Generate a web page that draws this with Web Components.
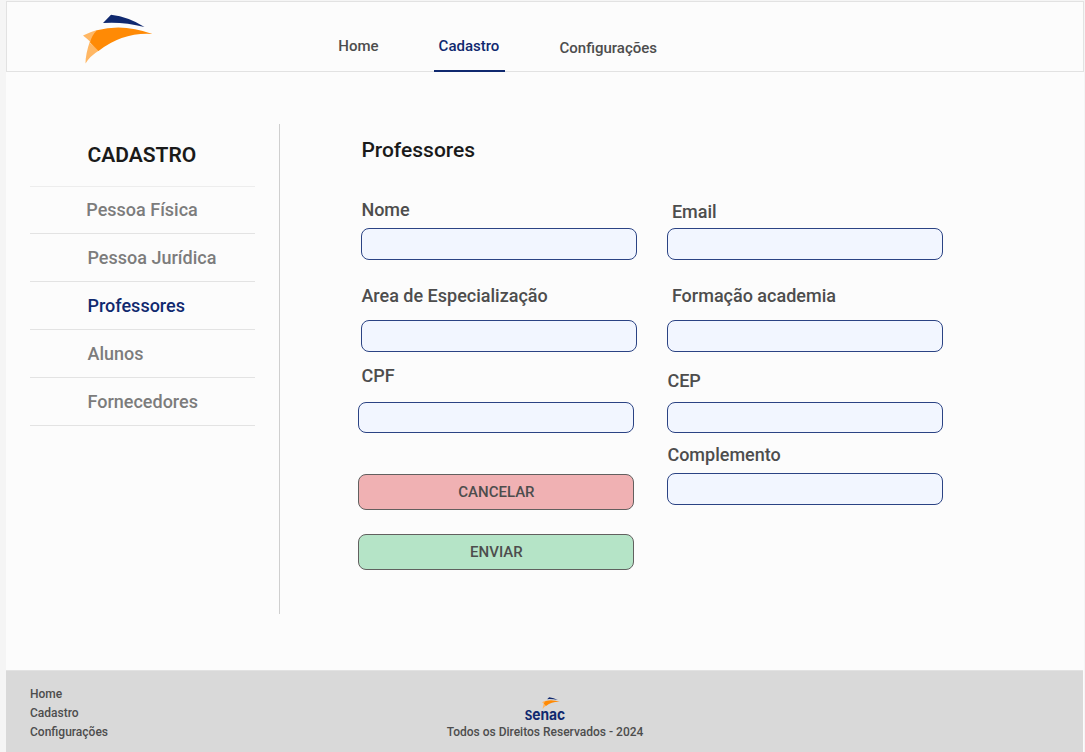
<!DOCTYPE html>
<html lang="pt-BR">
<head>
<meta charset="utf-8">
<title>Cadastro de Professores</title>
<style>
html,body{margin:0;height:100%;background:#f5f5f5;font-family:Roboto,"Liberation Sans",sans-serif;font-weight:500;color:#4d4d4d;overflow:hidden}
</style>
</head>
<body>
<app-page></app-page>
<script>
const define = (name, html, setup) => {
  const tpl = document.createElement('template');
  tpl.innerHTML = '<style>*,:host{box-sizing:border-box}</style>' + html;
  customElements.define(name, class extends HTMLElement {
    connectedCallback() {
      if (this.shadowRoot) return;
      const root = this.attachShadow({ mode: 'open' });
      root.append(tpl.content.cloneNode(true));
      if (setup) setup(this, root);
    }
  });
};

define('brand-mark', `
<style>:host{display:block}svg{display:block;width:100%;height:100%}</style>
<svg viewBox="0 0 70 50" preserveAspectRatio="none">
  <path fill="#ffb764" d="M0 21.5Q7 18 14 16L16 36.500Q7 27 0 21.500Z"/>
  <path fill="#ffb764" d="M7 29L16 36.500Q7 42 2.500 49.500Q2.500 40 7 27Z"/>
  <path fill="#ff8a05" d="M14 16.300Q40 9 69.500 20Q40 18 15.500 37L7 28.500Q9 21 14 16.300Z"/>
  <path fill="#10296f" d="M20 9L28 .8Q46 3 61.500 13Q40 7.500 20 9Z"/>
</svg>`);

define('nav-item', `
<style>
:host{display:flex;justify-content:center;height:68px;padding-top:34px;font-size:15px;line-height:20px;white-space:nowrap}
:host([active]){color:#10296f;border-bottom:2px solid #10296f;height:70px}
</style><slot></slot>`);

define('app-header', `
<style>
:host{display:flex;flex:none;height:71px;border:1px solid #e2e2e2;background:#fcfcfc}
brand-mark{width:70px;height:50px;margin:12px 0 0 76px}
nav{display:flex;margin-left:178px}
nav-item:nth-child(1){width:55px}
nav-item:nth-child(2){width:71px;margin-left:48px;padding-right:1px}
nav-item:nth-child(3){margin-left:54.500px;padding-top:36px}
</style>
<brand-mark></brand-mark>
<nav><nav-item>Home</nav-item><nav-item active>Cadastro</nav-item><nav-item>Configurações</nav-item></nav>`);

define('side-item', `
<style>
:host{display:block;height:48px;padding-left:57.500px;border-bottom:1px solid #e3e3e3;font-size:18px;line-height:47px;color:#7c7c7c}
:host([active]){color:#10296f}
:host([first]){height:47px;padding-left:56.300px;line-height:46px}
</style><slot></slot>`);

define('side-menu', `
<style>
:host{display:block;width:274px;height:490px;border-right:1px solid #cfcfcf;padding:0 24px}
h2{margin:0;height:63px;padding-left:57.500px;border-bottom:1px solid #ededed;font-size:21px;font-weight:600;line-height:63px;color:#1a1a1a}
</style>
<h2>CADASTRO</h2>
<side-item first>Pessoa Física</side-item><side-item>Pessoa Jurídica</side-item>
<side-item active>Professores</side-item><side-item>Alunos</side-item><side-item>Fornecedores</side-item>`);

define('form-field', `
<style>
:host{display:block;width:276px}
label{display:block;font-size:18px;line-height:24px;height:24px;white-space:nowrap}
input{display:block;width:276px;height:32px;border:1px solid #2b4384;border-radius:8px;background:#f2f6ff;margin:0;outline:0;padding:0 10px;font:inherit}
</style>
<label><slot></slot></label><input>`,
(el, root) => {
  const label = root.querySelector('label');
  label.style.marginBottom = (el.getAttribute('gap') || 6) + 'px';
  label.style.paddingLeft = (el.getAttribute('indent') || 0) + 'px';
  if (el.hasAttribute('short')) root.querySelector('input').style.height = '31px';
});

define('form-button', `
<style>
:host{display:block;width:276px}
button{display:block;width:100%;height:36px;border:1px solid #62605f;border-radius:8px;padding:0;font:500 15px/34px Roboto,sans-serif;color:#4d4d4d;background:#b5e4c7}
:host([kind=cancel]) button{background:#f0b1b3}
</style><button><slot></slot></button>`);

define('teacher-form', `
<style>
:host{display:block;padding-left:81.400px}
h1{margin:14px 0 36px;font-size:21px;line-height:24px;font-weight:500;color:#1a1a1a}
.cols{display:flex}
.left{width:309px;margin-left:-3px}
.left .in{margin-left:3px}
.right{padding-top:2px}
</style>
<h1>Professores</h1>
<div class="cols">
  <div class="left">
    <form-field class="in" gap="6">Nome</form-field>
    <form-field class="in" gap="12" style="margin-top:24px">Area de Especialização</form-field>
    <form-field gap="14" indent="3" short style="margin-top:12px">CPF</form-field>
    <form-button kind="cancel" style="margin-top:41px">CANCELAR</form-button>
    <form-button style="margin-top:24px">ENVIAR</form-button>
  </div>
  <div class="right">
    <form-field gap="4" indent="4.500">Email</form-field>
    <form-field gap="12" indent="4.500" style="margin-top:24px">Formação academia</form-field>
    <form-field gap="9" short style="margin-top:17px">CEP</form-field>
    <form-field gap="6" style="margin-top:10px">Complemento</form-field>
  </div>
</div>`);

define('app-footer', `
<style>
:host{display:flex;flex:none;height:82px;margin-right:1px;background:linear-gradient(#e2e2e2 1px,#d9d9d9 1px);font-size:12px;line-height:19px}
ul{list-style:none;margin:0;padding:15px 0 0 24px;width:441px}
.center{width:196px;display:flex;flex-direction:column;align-items:center;white-space:nowrap}
brand-mark{width:18px;height:12px;margin:27px 0 0 11px}
.word{font:700 15px/12px Inter,sans-serif;color:#10296f;transform:scaleX(.92);height:14px}
.word::first-letter{font-size:12.500px}
p{margin:0;line-height:19px}
</style>
<ul><li>Home</li><li>Cadastro</li><li>Configurações</li></ul>
<div class="center"><brand-mark></brand-mark><div class="word">Senac</div><p>Todos os Direitos Reservados - 2024</p></div>`);

define('app-page', `
<style>
:host{display:flex;flex-direction:column;height:752px;margin-left:6px;width:1078px;padding-top:1px;background:linear-gradient(#f5f5f5 1px,#fcfcfc 1px)}
main{display:flex;flex:1;padding-top:52px}
</style>
<app-header></app-header>
<main><side-menu></side-menu><teacher-form></teacher-form></main>
<app-footer></app-footer>`);
</script>
</body>
</html>
